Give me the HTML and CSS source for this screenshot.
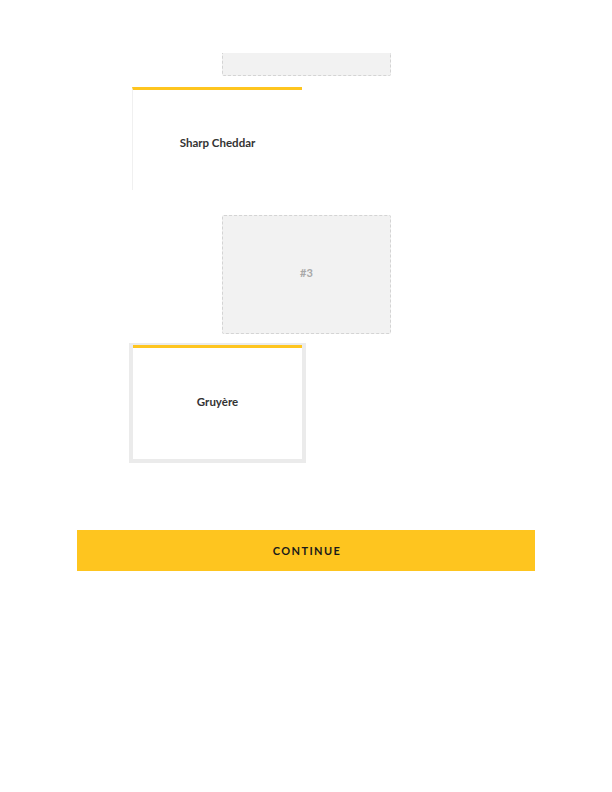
FILE: index.html
```html
<!DOCTYPE html>
<html>
<head>
<meta charset="utf-8">
<link rel="stylesheet" href="styles.css">
</head>
<body>
<div class="page">
  <div class="slot slot-top"></div>
  <div class="card card-drag">
    <span class="label">Sharp Cheddar</span>
  </div>
  <div class="slot slot-mid"><span class="num">#3</span></div>
  <div class="frame">
    <div class="card card-drop"><span class="label">Gruyère</span></div>
  </div>
  <button class="continue">CONTINUE</button>
</div>
</body>
</html>
```
FILE: styles.css
```css
html, body {
  margin: 0;
  padding: 0;
  background: #fff;
  font-family: Lato, "Noto Sans", sans-serif;
}
.page {
  display: flex;
  flex-direction: column;
  align-items: flex-start;
  padding-top: 53px;
}
.slot {
  box-sizing: border-box;
  background: #f2f2f2;
  border: 1px dashed #d4d4d4;
  border-radius: 2px;
  margin-left: 222px;
  width: 169px;
  display: flex;
  align-items: center;
  justify-content: center;
}
.slot-top {
  height: 23px;
  border-top: none;
  border-radius: 0 0 2px 2px;
}
.slot-mid {
  height: 119px;
  margin-top: 25px;
  padding-bottom: 5px;
}
.num {
  color: #a8a8a8;
  font-size: 11px;
  font-weight: 700;
}
.card {
  box-sizing: border-box;
  background: #fff;
  border-top: 3px solid #fec51f;
  display: flex;
  align-items: center;
  justify-content: center;
}
.card-drag {
  margin-top: 11px;
  margin-left: 132px;
  width: 170px;
  height: 103px;
  border-left: 1px solid #f0f0f0;
  padding-top: 4px;
}
.label {
  color: #333;
  font-size: 11.5px;
  font-weight: 700;
}
.frame {
  box-sizing: border-box;
  margin-top: 9px;
  margin-left: 129px;
  width: 177px;
  height: 120px;
  background: #ebebeb;
  padding: 2px 4px 4px 4px;
  display: flex;
}
.card-drop {
  flex: 1;
  padding-bottom: 5px;
}
.continue {
  margin-top: 67px;
  margin-left: 77px;
  width: 458px;
  height: 41px;
  border: none;
  background: #fec51f;
  color: #1a1a1a;
  font-family: Lato, "Noto Sans", sans-serif;
  font-weight: 700;
  font-size: 11px;
  letter-spacing: 1.4px;
  padding: 0 0 0 2px;
  cursor: pointer;
}
```
